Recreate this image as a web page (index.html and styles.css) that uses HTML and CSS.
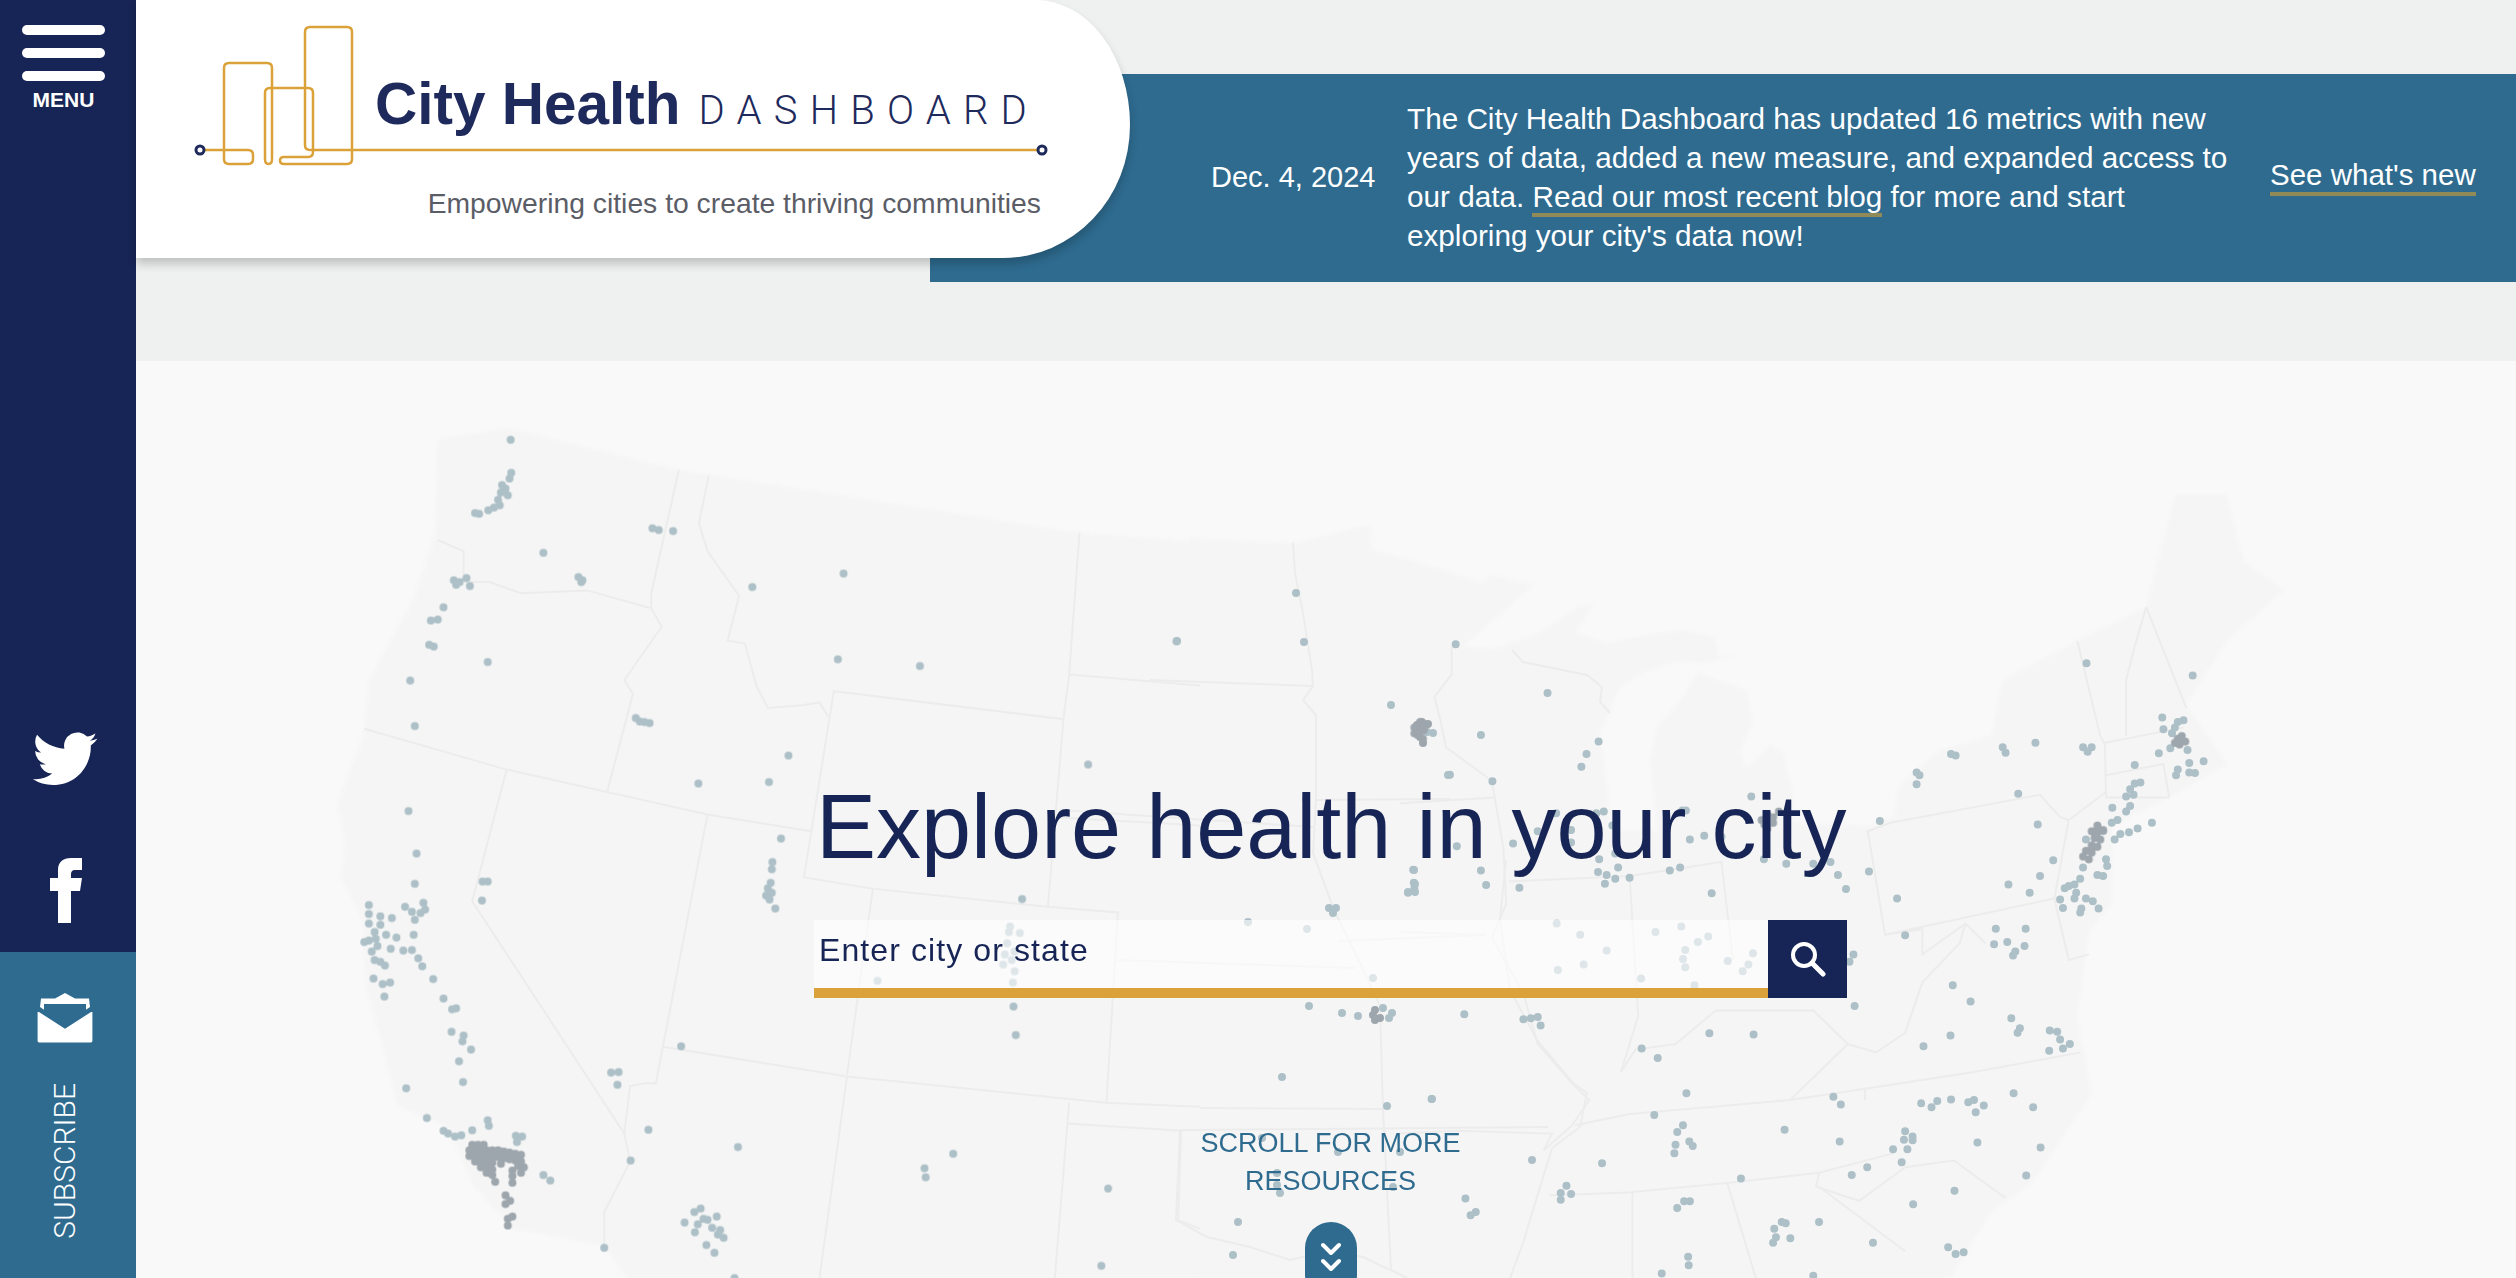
FILE: index.html
```html
<!DOCTYPE html>
<html lang="en">
<head>
    <meta charset="UTF-8">
    <meta name="viewport" content="width=device-width, initial-scale=1.0">
    <title>City Health Dashboard</title>
    <link rel="stylesheet" href="styles.css">
</head>
<body>
    <aside class="sidebar">
        <a class="menu" href="#">
            <span class="menu-bar"></span>
            <span class="menu-bar"></span>
            <span class="menu-bar"></span>
            <span class="menu-label">MENU</span>
        </a>
        <a class="social twitter" href="#" aria-label="Twitter">
            <svg viewBox="0 0 24 20" width="66" height="54"><path fill="#fff" transform="translate(0 -2.1)" d="M23.953 4.57a10 10 0 01-2.825.775 4.958 4.958 0 002.163-2.723c-.951.555-2.005.959-3.127 1.184a4.92 4.92 0 00-8.384 4.482C7.69 8.095 4.067 6.13 1.64 3.162a4.822 4.822 0 00-.666 2.475c0 1.71.87 3.213 2.188 4.096a4.904 4.904 0 01-2.228-.616v.06a4.923 4.923 0 003.946 4.827 4.996 4.996 0 01-2.212.085 4.936 4.936 0 004.604 3.417 9.867 9.867 0 01-6.102 2.105c-.39 0-.779-.023-1.17-.067a13.995 13.995 0 007.557 2.209c9.053 0 13.998-7.496 13.998-13.985 0-.21 0-.42-.015-.63A9.935 9.935 0 0024 4.59z"/></svg>
        </a>
        <a class="social facebook" href="#" aria-label="Facebook">
            <svg viewBox="0 0 32 65" width="32" height="65"><path fill="#fff" d="M8 65V33H0V20h8v-8C8 4 13 0 21 0h11v12h-7c-3 0-4 2-4 4v4h11l-2 13h-9v32z"/></svg>
        </a>
        <a class="subscribe" href="#">
            <svg viewBox="0 0 56 50" width="56" height="50">
                <path fill="#fff" d="M28 0l10 5.500h14l1 8.500-25 17L3 14l1-8.500h14z"/>
                <path fill="#2e6b8f" d="M7 11h42v9L28 33 7 20z"/>
                <path fill="#fff" stroke="#2e6b8f" stroke-width="1.2" d="M0 17l28 18 28-18v31a2 2 0 0 1-2 2H2a2 2 0 0 1-2-2z"/>
            </svg>
            <span class="subscribe-label">SUBSCRIBE</span>
        </a>
    </aside>

    <main class="content">
        <header class="top">
            <div class="logo-card">
                <svg class="logo-mark" viewBox="0 0 930 170" width="930" height="170">
                    <path class="logo-line" d="M10 140H54q5 0 5 5v4q0 5-5 5H35q-5 0-5-5V58q0-5 5-5H73q5 0 5 5v91q0 5-3.500 5t-3.500-5V83q0-5 5-5h38q5 0 5 5v59q0 5-5 5H90q-4 0-4 3.500t4 3.500H153q5 0 5-5V22q0-5-5-5H116q-5 0-5 5V135q0 5 5 5H844"/>
                    <circle class="logo-dot" cx="6" cy="140" r="4"/>
                    <circle class="logo-dot" cx="848" cy="140" r="4"/>
                </svg>
                <div class="brand"><strong>City Health</strong> <span>DASHBOARD</span></div>
                <div class="tagline">Empowering cities to create thriving communities</div>
            </div>
            <div class="notice">
                <div class="notice-date">Dec. 4, 2024</div>
                <p class="notice-text">The City Health Dashboard has updated 16 metrics with new years of data, added a new measure, and expanded access to our data. <a href="#">Read our most recent blog</a> for more and start exploring your city's data now!</p>
                <a class="notice-link" href="#">See what's new</a>
            </div>
        </header>

        <section class="hero">
            <svg class="map" viewBox="136 361 2380 917" width="2380" height="917" aria-hidden="true">
                <g class="land">
                    <path transform="translate(300 400) scale(.574 .56)" d="M240 70L365 50 660 125 1358 237 1568 253V1568H570L530 1510 370 1480 300 1400 260 1300 170 1260 140 1140 115 1050 110 930 70 850 80 800 65 720 110 600 120 500 200 350 235 240Z"/>
                    <path d="M1190 538L1293 543 1357 527 1370 525 1372 550 1417 562 1450 573V1278H1190Z"/>
                    <path d="M1400 562L1440 568 1480 583 1492 575 1533 585 1463 647 1497 648 1540 633 1577 607 1595 603 1575 632 1607 643 1647 635 1680 630 1715 637 1720 657 1738 655 1703 663 1673 662 1643 673 1620 687 1600 733 1607 787 1610 830 1657 830 1650 760 1657 727 1683 697 1697 673 1747 690 1753 720 1740 753 1747 768 1770 745 1783 753 1793 793 1793 822 1868 826 1894 817 1899 786 1940 750 1991 736 2003 680 2077 641 2146 607 2175 495 2227 495 2244 562 2284 590 2227 641 2186 705 2227 764 2169 798 2112 826V904L2089 932 2077 1016 2092 1094 2031 1184 1991 1212 1951 1278H1400Z"/>
                </g>
                <g class="states">
                    <g transform="translate(300 400) scale(.574 .56)">
                        <path d="M240 250L285 270V325H330L385 345 500 340 612 372"/>
                        <path d="M660 125L612 345V372L630 405 565 500 580 525 535 700"/>
                        <path d="M712 135L695 220 710 270 765 350 745 430 775 435 795 510 815 550 875 545 905 540 920 565"/>
                        <path d="M112 587L360 660 535 700 710 740 890 770"/>
                        <path d="M360 660L300 895 565 1310 575 1360 530 1450V1510"/>
                        <path d="M710 740L620 1220 600 1220 575 1225 565 1310"/>
                        <path d="M930 520L878 852 1000 873 1303 905 1330 570Z"/>
                        <path d="M1358 237L1340 490 1330 570M1340 490L1568 510M1315 745L1568 760"/>
                        <path d="M998 873L953 1205M1303 905L1425 915 1405 1255"/>
                        <path d="M632 1155L953 1208 1405 1255 1568 1262M953 1208L905 1568"/>
                        <path d="M1340 1255L1337 1292 1535 1305 1530 1465 1568 1480M1337 1292L1315 1568"/>
                    </g>
                    <path d="M1150 680L1313 686M1293 543L1295 573 1303 613 1312 670 1313 686 1303 700 1316 715V800L1450 799"/>
                    <path d="M1060 810L1313 827M1117 960L1355 968M1338 941L1485 935"/>
                    <path d="M1316 800L1313 853 1334 910 1362 967 1380 1006 1383 1109 1391 1270 1407 1278"/>
                    <path d="M1200 1108L1383 1109M1180 1130L1548 1127M1180 1130L1176 1220 1207 1237 1250 1247 1290 1260 1330 1250 1363 1257 1390 1270"/>
                    <path d="M1506 860L1500 920 1510 990 1537 1040 1573 1083 1587 1093 1580 1127 1552 1148 1523 1243 1510 1278"/>
                    <path d="M1512 650L1523 662 1587 675 1602 687 1600 702 1610 713"/>
                    <g transform="translate(1400 400) scale(.574 .56)">
                        <path d="M90 440V490L60 530 70 570 80 620 160 680 165 710 0 720M165 710L180 800 185 900 160 960 215 1060 240 1150 300 1220 330 1250 300 1295M0 950L150 955"/>
                        <path d="M190 860L400 850 560 825 580 1000M400 850L415 1100 385 1200"/>
                        <path d="M385 1200L410 1160 480 1150 550 1090 720 1090 780 1150 830 1165 880 1130 910 1040 975 970 985 935 1020 970"/>
                        <path d="M815 770L855 755 1115 705 1150 745 1165 750 1140 890 845 955ZM845 955L910 945V990L985 935M1140 890L1165 1000 1200 990"/>
                        <path d="M305 1295L400 1275 680 1250 810 1230 1000 1200 1185 1165M250 1340L300 1295M250 1340L265 1310 100 1305 0 1310"/>
                        <path d="M260 1420L400 1415 570 1398 730 1380 860 1345M730 1380L725 1405 800 1430 880 1370 965 1358 1055 1425"/>
                        <path d="M405 1415V1568M570 1398L620 1568M730 1405L880 1520M680 1250L730 1200 780 1150M810 1230V1250"/>
                        <path d="M1180 430L1220 600 1228 615 1230 710 1340 710M1300 370L1280 440 1265 500V600M1300 370L1370 550M1228 612L1365 585M1230 670L1330 650 1340 710M1165 750L1230 700"/>
                    </g>
                </g>
                <g class="dots">
                    <path transform="translate(300 400) scale(.574 .56)" d="M367 71h0M368 130h0M365 140h0M352 152h0M358 158h0M362 170h0M350 165h0M345 178h0M348 188h0M338 192h0M328 197h0M305 202h0M312 203h0M614 229h0M625 232h0M650 234h0M424 273h0M947 310h0M788 334h0M268 322h0M272 330h0M290 318h0M278 325h0M296 332h0M485 316h0M492 322h0M490 325h0M250 370h0M228 394h0M240 392h0M225 437h0M233 440h0M327 468h0M937 463h0M1080 475h0M1527 431h0M192 501h0M200 582h0M585 568h0M592 574h0M600 575h0M609 577h0M851 635h0M817 682h0M694 685h0M1373 651h0M838 783h0M189 734h0M823 825h0M822 838h0M820 862h0M815 872h0M822 880h0M812 885h0M818 892h0M828 908h0M203 810h0M200 864h0M318 860h0M327 860h0M317 894h0M1258 891h0M120 902h0M120 918h0M140 922h0M120 935h0M140 937h0M160 925h0M183 905h0M195 914h0M215 898h0M218 910h0M210 916h0M200 928h0M130 950h0M198 955h0M120 965h0M132 962h0M150 955h0M168 960h0M112 968h0M135 975h0M158 980h0M195 982h0M180 983h0M125 985h0M130 1000h0M140 1003h0M148 1010h0M206 997h0M213 1011h0M128 1033h0M232 1034h0M144 1043h0M157 1040h0M147 1065h0M250 1069h0M265 1088h0M272 1086h0M264 1128h0M285 1135h0M283 1145h0M298 1160h0M277 1181h0M284 1218h0M185 1229h0M664 1154h0M542 1201h0M555 1200h0M553 1223h0M221 1282h0M250 1305h0M258 1310h0M270 1315h0M281 1313h0M300 1304h0M327 1286h0M329 1296h0M376 1314h0M387 1315h0M378 1325h0M607 1303h0M763 1334h0M576 1358h0M1138 1346h0M1088 1372h0M1090 1388h0M1408 1408h0M424 1384h0M436 1394h0M530 1514h0M698 1444h0M687 1450h0M726 1458h0M703 1462h0M710 1464h0M670 1469h0M693 1472h0M688 1486h0M718 1478h0M732 1482h0M728 1490h0M738 1496h0M708 1509h0M722 1523h0M1396 1546h0M757 1568h0M1237 940h0M1235 950h0M1254 952h0M1232 970h0M1228 990h0M1245 985h0M1240 1000h0M1225 1008h0M1245 1020h0M1242 1040h0M1006 1037h0M1243 1083h0M1247 1134h0"/>
                    <path transform="translate(1400 400) scale(.574 .56)" d="M97 436h0M257 523h0M141 598h0M346 610h0M325 632h0M316 655h0M87 669h0M161 681h0M1196 470h0M1381 492h0M1328 567h0M1330 588h0M1345 595h0M1355 575h0M1365 572h0M1350 585h0M1050 620h0M1055 630h0M1107 612h0M1190 620h0M1205 620h0M1198 628h0M960 632h0M968 635h0M1322 631h0M1342 622h0M1372 625h0M1375 648h0M1280 652h0M1355 660h0M1352 670h0M1375 665h0M1385 666h0M1400 645h0M900 665h0M905 670h0M900 686h0M1077 703h0M612 708h0M492 733h0M498 733h0M272 738h0M342 738h0M355 735h0M370 760h0M298 768h0M298 790h0M99 797h0M197 792h0M240 770h0M505 785h0M530 778h0M560 780h0M634 820h0M673 828h0M720 828h0M750 825h0M347 820h0M375 810h0M380 835h0M345 843h0M360 848h0M375 855h0M400 853h0M470 840h0M488 835h0M23 839h0M141 840h0M24 862h0M25 872h0M14 880h0M150 866h0M208 871h0M357 864h0M763 848h0M777 873h0M817 842h0M543 881h0M866 890h0M836 752h0M1111 758h0M1060 865h0M1097 880h0M1115 850h0M1138 822h0M273 935h0M314 955h0M360 983h0M445 950h0M490 940h0M537 958h0M519 968h0M497 982h0M493 998h0M497 1013h0M275 1018h0M320 1008h0M571 1002h0M607 1008h0M597 1020h0M615 988h0M420 1033h0M513 1045h0M112 1097h0M215 1106h0M228 1104h0M240 1102h0M245 1117h0M790 990h0M783 1003h0M792 1082h0M880 956h0M1038 944h0M1090 944h0M1035 972h0M1058 968h0M1088 975h0M1072 985h0M1068 992h0M963 1045h0M994 1074h0M1065 1104h0M1080 1122h0M1076 1130h0M959 1135h0M912 1154h0M1132 1126h0M1145 1128h0M1150 1142h0M1167 1150h0M1155 1158h0M1131 1162h0M539 1131h0M616 1133h0M421 1158h0M449 1175h0M55 1248h0M499 1238h0M755 1244h0M768 1258h0M908 1256h0M936 1252h0M926 1263h0M960 1249h0M990 1254h0M1000 1250h0M1017 1260h0M1003 1272h0M1069 1238h0M1103 1263h0M443 1277h0M493 1295h0M483 1307h0M504 1324h0M510 1332h0M480 1330h0M478 1345h0M670 1303h0M766 1324h0M880 1306h0M878 1321h0M893 1315h0M893 1322h0M859 1338h0M884 1338h0M1006 1326h0M1116 1335h0M874 1361h0M814 1370h0M787 1384h0M594 1390h0M1091 1385h0M352 1363h0M230 1357h0M290 1403h0M280 1416h0M298 1418h0M280 1428h0M114 1426h0M132 1450h0M123 1456h0M483 1443h0M495 1431h0M505 1431h0M966 1412h0M894 1436h0M730 1468h0M824 1505h0M955 1513h0M968 1525h0M982 1522h0M652 1480h0M665 1468h0M672 1470h0M655 1495h0M680 1497h0M650 1505h0M502 1530h0M503 1545h0M456 1560h0M720 1564h0M1290 683h0M1280 685h0M1272 695h0M1265 708h0M1278 705h0M1272 725h0M1265 735h0M1250 750h0M1240 755h0M1225 770h0M1241 728h0M1245 785h0M1255 775h0M1270 772h0M1285 765h0M1310 755h0M1195 785h0M1230 820h0M1232 832h0M1225 850h0M1215 848h0M1190 835h0M1185 855h0M1175 865h0M1165 868h0M1158 872h0M1178 880h0M1150 892h0M1175 890h0M1195 890h0M1207 895h0M1217 908h0M1155 907h0M1187 908h0M1185 915h0"/>
                    <path d="M1177 641h0M1296 593h0M1304 642h0M1391 705h0M1433 733h0M1427 732h0M1448 775h0M1306 799h0M1414 870h0M1415 884h0M1408 892h0M1415 892h0M1329 908h0M1336 908h0M1333 913h0M1248 922h0M1307 929h0M1373 978h0M1309 1006h0M1342 1013h0M1358 1016h0M1383 1008h0M1392 1013h0M1389 1018h0M1282 1077h0M1387 1106h0M1432 1099h0M1262 1138h0M1338 1152h0M1400 1152h0M1277 1173h0M1277 1185h0M1280 1193h0M1393 1187h0M1238 1222h0M1233 1255h0"/>
                </g>
                <g class="dots dots-dense">
                    <path transform="translate(300 400) scale(.574 .56)" d="M300 1330h0M310 1330h0M320 1330h0M295 1340h0M305 1340h0M315 1340h0M325 1340h0M335 1340h0M345 1340h0M355 1342h0M365 1344h0M375 1346h0M385 1348h0M295 1350h0M305 1350h0M315 1350h0M325 1350h0M335 1350h0M345 1352h0M355 1354h0M365 1356h0M375 1358h0M385 1360h0M305 1360h0M315 1360h0M325 1360h0M335 1362h0M350 1364h0M380 1368h0M390 1370h0M315 1370h0M325 1372h0M335 1374h0M370 1376h0M325 1380h0M335 1384h0M370 1386h0M385 1380h0M340 1396h0M370 1398h0M358 1420h0M366 1430h0M358 1436h0M370 1458h0M362 1462h0M362 1474h0"/>
                    <path transform="translate(1400 400) scale(.574 .56)" d="M1355 605h0M1362 600h0M1368 610h0M1358 615h0M1350 612h0M1215 760h0M1205 770h0M1215 772h0M1225 768h0M1210 782h0M1220 785h0M1205 795h0M1215 798h0M1195 805h0M1205 808h0M1190 815h0M1200 820h0M35 575h0M25 585h0M32 585h0M25 595h0M30 598h0M40 605h0M38 590h0M45 580h0M640 740h0M650 745h0M650 755h0M630 750h0M635 758h0M640 765h0M660 735h0"/>
                    <path d="M1417 725h0M1422 722h0M1428 724h0M1417 733h0M1424 730h0M1420 737h0M1423 743h0M1375 1010h0M1373 1015h0M1375 1020h0M1380 1018h0"/>
                </g>
            </svg>

            <div class="hero-inner">
                <h1 class="hero-title">Explore health in your city</h1>
                <form class="search">
                    <input class="search-input" type="text" placeholder="Enter city or state">
                    <button class="search-btn" type="button" aria-label="Search">
                        <svg viewBox="0 0 36 36" width="36" height="36">
                            <circle cx="14" cy="14" r="11" fill="none" stroke="#fff" stroke-width="4"/>
                            <path d="M22 22l11 11" fill="none" stroke="#fff" stroke-width="5" stroke-linecap="round"/>
                        </svg>
                    </button>
                </form>
                <div class="scroll-note">SCROLL FOR MORE RESOURCES</div>
                <a class="scroll-pill" href="#" aria-label="Scroll down">
                    <svg viewBox="0 0 20 30" width="20" height="30">
                        <path d="M2 3l8 8 8-8M2 19l8 8 8-8" fill="none" stroke="#fff" stroke-width="4" stroke-linecap="round" stroke-linejoin="round"/>
                    </svg>
                </a>
            </div>
        </section>
    </main>
</body>
</html>
```

FILE: styles.css
```css
* {
    box-sizing: border-box;
}

html, body {
    margin: 0;
    height: 100%;
    overflow: hidden;
}

body {
    display: flex;
    font-family: "Liberation Sans", Arial, sans-serif;
    background-color: #eff1f0;
    color: #172556;
}

a {
    color: inherit;
    text-decoration: none;
}

/* left rail */
.sidebar {
    width: 136px;
    height: 100vh;
    flex: none;
    display: flex;
    flex-direction: column;
    align-items: flex-start;
    background-color: #172556;
    color: white;
}

.menu {
    display: flex;
    flex-direction: column;
    align-items: center;
    gap: 13px;
    margin-left: 22px;
    padding-top: 25px;
}

.menu-bar {
    display: block;
    width: 83px;
    height: 10px;
    border-radius: 5px;
    background: white;
}

.menu-label {
    margin-top: -6px;
    font-size: 21px;
    line-height: 24px;
    font-weight: bold;
}

.social {
    display: block;
    line-height: 0;
}

.twitter {
    margin-top: 620px;
    margin-left: 32px;
}

.facebook {
    margin-top: 72px;
    margin-left: 50px;
}

.subscribe {
    margin-top: 29px;
    width: 100%;
    flex: 1;
    display: flex;
    flex-direction: column;
    align-items: center;
    padding: 41px 6px 0 0;
    background-color: #2e6b8f;
}

.subscribe-label {
    margin-top: 40px;
    writing-mode: vertical-rl;
    transform: rotate(180deg);
    font-family: Roboto, sans-serif;
    font-weight: 300;
    font-size: 30px;
    line-height: 30px;
}

/* header strip */
.content {
    flex: 1;
    min-width: 0;
    display: flex;
    flex-direction: column;
}

.top {
    position: relative;
    height: 361px;
    flex: none;
    padding-top: 74px;
    padding-left: 794px;
}

.logo-card {
    position: absolute;
    left: 0;
    top: 0;
    z-index: 2;
    width: 994px;
    height: 258px;
    padding: 71px 90px 0 239px;
    background: white;
    border-top-right-radius: 94px 125px;
    border-bottom-right-radius: 127px 133px;
    box-shadow: 0 6px 10px rgba(0, 0, 0, 0.2);
}

.logo-mark {
    position: absolute;
    left: 58px;
    top: 10px;
}

.logo-line {
    fill: none;
    stroke: #dca23a;
    stroke-width: 2.5;
}

.logo-dot {
    fill: white;
    stroke: #1f2a5c;
    stroke-width: 3;
}

.brand {
    position: relative;
    display: flex;
    align-items: baseline;
    gap: 18px;
    color: #1f2a5c;
    white-space: nowrap;
}

.brand strong {
    font-size: 58.5px;
    line-height: 66px;
}

.brand span {
    font-family: Roboto, sans-serif;
    font-weight: 300;
    font-size: 40px;
    letter-spacing: 12.2px;
}

.tagline {
    margin-top: 50px;
    margin-right: -1px;
    text-align: right;
    font-size: 28.3px;
    line-height: 32px;
    color: #5b5d66;
    white-space: nowrap;
}

.notice {
    height: 208px;
    display: flex;
    align-items: center;
    padding-left: 281px;
    padding-bottom: 2px;
    background-color: #2e6b8f;
    color: white;
    font-size: 29.7px;
    line-height: 39px;
}

.notice-date {
    width: 163px;
    flex: none;
    font-size: 29px;
    white-space: nowrap;
}

.notice-text {
    width: 830px;
    flex: none;
    margin: 0 0 0 33px;
}

.notice-text a {
    border-bottom: 4px solid #8f8a58;
}

.notice-link {
    margin-left: 33px;
    font-size: 29.5px;
    line-height: 34px;
    white-space: nowrap;
    border-bottom: 4px solid #8f8a58;
}

/* map hero */
.hero {
    position: relative;
    flex: 1;
    overflow: hidden;
    background-color: #f9f9f9;
}

.map {
    position: absolute;
    left: 0;
    top: 0;
}

.land {
    filter: blur(1.5px);
}

.land path {
    fill: #f5f5f5;
}

.states path {
    fill: none;
    stroke: #ececec;
    stroke-width: 2;
    vector-effect: non-scaling-stroke;
}

.dots {
    filter: blur(0.6px);
}

.dots path {
    fill: none;
    stroke: #adc0c7;
    stroke-width: 8;
    stroke-linecap: round;
    vector-effect: non-scaling-stroke;
}

.dots-dense path {
    stroke: #9ea6ad;
}

.hero-inner {
    position: relative;
    width: 1033px;
    margin-left: 678px;
    padding-top: 412px;
    display: flex;
    flex-direction: column;
    align-items: center;
}

.hero-title {
    align-self: flex-start;
    margin: 0 0 39px 2px;
    font-size: 90px;
    line-height: 108px;
    font-weight: normal;
    white-space: nowrap;
}

.search {
    width: 100%;
    height: 78px;
    display: flex;
}

.search-input {
    flex: 1;
    min-width: 0;
    padding: 0 0 7px 5px;
    border: none;
    border-bottom: 10px solid #dca23a;
    border-radius: 0;
    outline: none;
    background: rgba(255, 255, 255, 0.6);
    font-family: inherit;
    font-size: 32px;
    letter-spacing: 1.1px;
    color: #172556;
}

.search-input::placeholder {
    color: #172556;
    opacity: 1;
}

.search-btn {
    width: 79px;
    flex: none;
    display: flex;
    align-items: center;
    justify-content: center;
    padding: 0;
    border: none;
    background-color: #172556;
}

.scroll-note {
    width: 300px;
    margin-top: 126px;
    text-align: center;
    font-size: 27px;
    line-height: 38px;
    color: #2e6b8f;
}

.scroll-pill {
    width: 52px;
    height: 80px;
    margin-top: 22px;
    padding-top: 20px;
    flex: none;
    display: flex;
    justify-content: center;
    border-radius: 26px;
    background-color: #2e6b8f;
}
```
